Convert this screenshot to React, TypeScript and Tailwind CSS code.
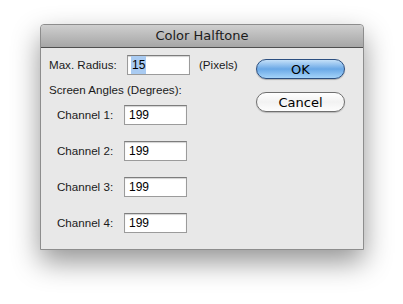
const font = { fontFamily: '"Liberation Sans", Arial, sans-serif' };
const titleFont = { fontFamily: '"DejaVu Sans", "Liberation Sans", sans-serif' };

function Field({ value, selected }: { value: string; selected?: boolean }) {
  return (
    <div className="h-[20px] w-[63px] bg-white border border-[#9b9b9b] border-t-[#7d7d7d] shadow-[inset_0_1px_1px_rgba(0,0,0,0.18)] flex items-center pl-[3px] text-[12px] text-black">
      {selected ? <span className="bg-[#a9cbf2] px-[1px]">{value}</span> : <span className="px-[1px]">{value}</span>}
    </div>
  );
}

function ChannelRow({ n }: { n: number }) {
  return (
    <div className="flex items-center h-[20px] pl-[8px]">
      <span className="w-[67px]">Channel {n}:</span>
      <Field value="199" />
    </div>
  );
}

export default function App() {
  return (
    <div className="w-[403px] h-[304px] bg-white pl-[40px] pt-[24px] overflow-hidden" style={font}>
      <div className="w-[324px] h-[226px] flex flex-col bg-[#e8e8e8] border border-[#8d8d8d] rounded-t-[4px] shadow-[0_12px_28px_rgba(0,0,0,0.42)] text-[11.6px] text-[#1a1a1a]">
        {/* Title bar */}
        <div
          className="h-[23px] shrink-0 flex items-center justify-center rounded-t-[4px] bg-gradient-to-b from-[#cfcfcf] to-[#a6a6a6] border-b border-[#4f4f4f] text-[13px] text-[#1c1c1c]"
          style={titleFont}
        >
          Color Halftone
        </div>

        <div className="flex flex-1">
          {/* Left column */}
          <div className="w-[207px] pl-[8px] pt-[7px] flex flex-col">
            <div className="flex items-center h-[20px]">
              <span className="w-[78px]">Max. Radius:</span>
              <div className="w-[62px]">
                <Field value="15" selected />
              </div>
              <span className="ml-[10px]">(Pixels)</span>
            </div>
            <div className="h-[16px] mt-[7px] flex items-center">Screen Angles (Degrees):</div>
            <div className="mt-[7px] flex flex-col gap-[16px]">
              <ChannelRow n={1} />
              <ChannelRow n={2} />
              <ChannelRow n={3} />
              <ChannelRow n={4} />
            </div>
          </div>

          {/* Buttons */}
          <div className="pl-[8px] pt-[11px] flex flex-col gap-[13px]" style={titleFont}>
            <button className="w-[89px] h-[20px] rounded-full border border-[#2c4f80] bg-gradient-to-b from-[#c4e0f8] via-[#6aa8e6] to-[#a4d3f9] shadow-[0_1px_1px_rgba(0,0,0,0.25)] text-[13px] text-black leading-none">
              OK
            </button>
            <button className="w-[89px] h-[20px] rounded-full border border-[#6f6f6f] bg-gradient-to-b from-white via-[#f2f2f2] to-[#fdfdfd] shadow-[0_1px_1px_rgba(0,0,0,0.2)] text-[13px] text-black leading-none">
              Cancel
            </button>
          </div>
        </div>
      </div>
    </div>
  );
}
